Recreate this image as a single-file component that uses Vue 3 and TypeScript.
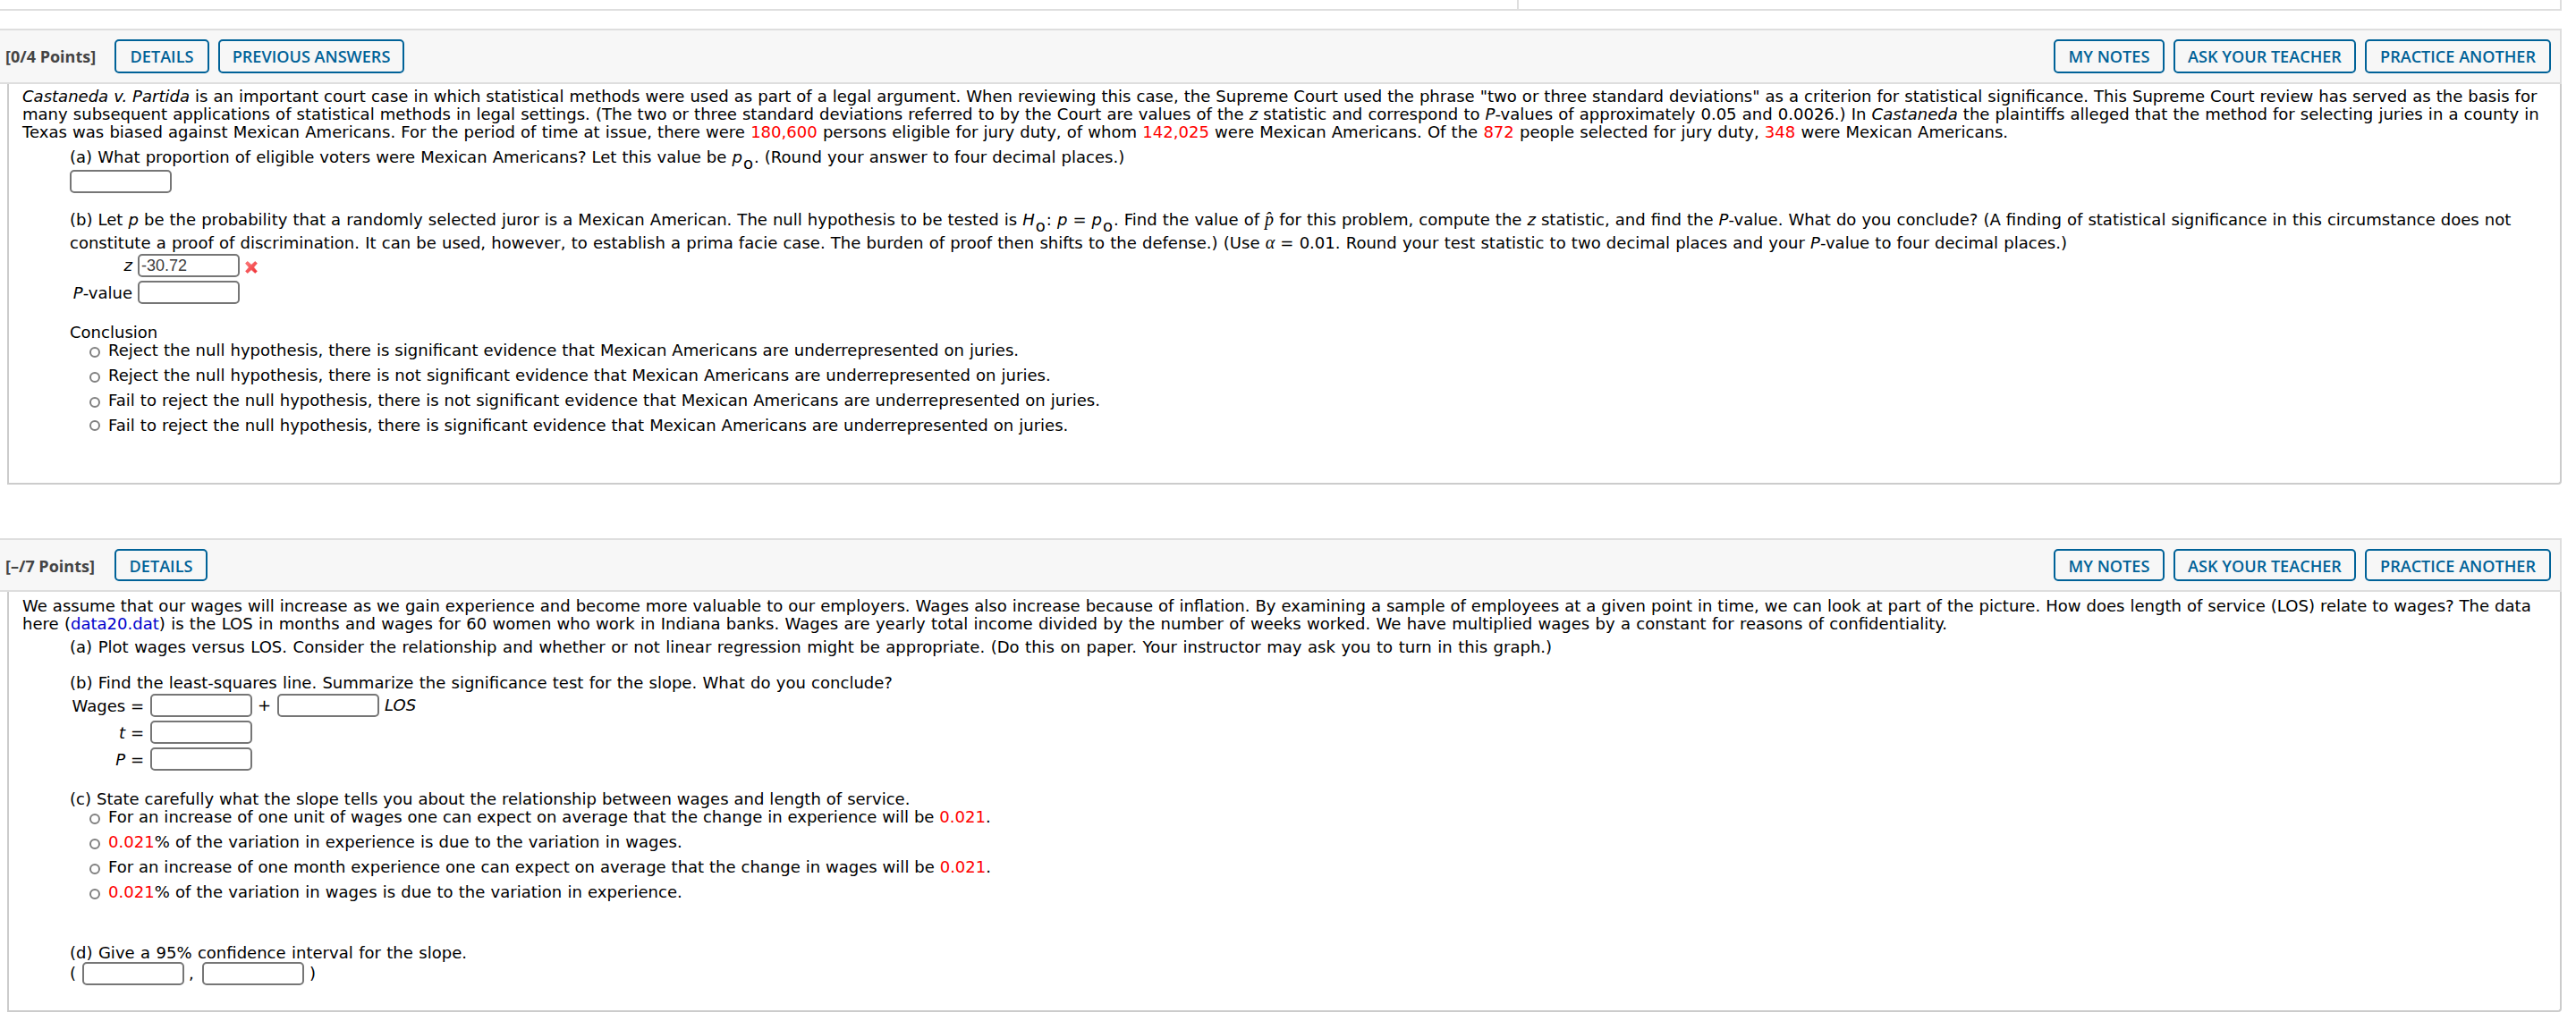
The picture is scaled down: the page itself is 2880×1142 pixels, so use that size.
<script setup lang="ts">
import { ref } from 'vue'

const actions = [
  { label: 'MY NOTES', width: 124 },
  { label: 'ASK YOUR TEACHER', width: 204 },
  { label: 'PRACTICE ANOTHER', width: 208 },
]
const conclusions = [
  'Reject the null hypothesis, there is significant evidence that Mexican Americans are underrepresented on juries.',
  'Reject the null hypothesis, there is not significant evidence that Mexican Americans are underrepresented on juries.',
  'Fail to reject the null hypothesis, there is not significant evidence that Mexican Americans are underrepresented on juries.',
  'Fail to reject the null hypothesis, there is significant evidence that Mexican Americans are underrepresented on juries.',
]
const slopes = [
  ['For an increase of one unit of wages one can expect on average that the change in experience will be ', '0.021', '.'],
  ['', '0.021', '% of the variation in experience is due to the variation in wages.'],
  ['For an increase of one month experience one can expect on average that the change in wages will be ', '0.021', '.'],
  ['', '0.021', '% of the variation in wages is due to the variation in experience.'],
]
const zValue = ref('-30.72')
</script>

<template>
  <div class="page">
    <div class="previous"><div class="previous-left"></div></div>

    <section class="question first">
      <header class="bar">
        <span class="points">[0/4 Points]</span>
        <button class="btn details">DETAILS</button>
        <button class="btn answers">PREVIOUS ANSWERS</button>
        <div class="actions">
          <button v-for="a in actions" :key="a.label" class="btn" :style="{ width: a.width + 'px' }">{{ a.label }}</button>
        </div>
      </header>
      <div class="body">
        <p class="t l1"><i>Castaneda v. Partida</i> is an important court case in which statistical methods were used as part of a legal argument. When reviewing this case, the Supreme Court used the phrase "two or three standard deviations" as a criterion for statistical significance. This Supreme Court review has served as the basis for</p>
        <p class="t l2">many subsequent applications of statistical methods in legal settings. (The two or three standard deviations referred to by the Court are values of the <i>z</i> statistic and correspond to <i>P</i>-values of approximately 0.05 and 0.0026.) In <i>Castaneda</i> the plaintiffs alleged that the method for selecting juries in a county in</p>
        <p class="t l3">Texas was biased against Mexican Americans. For the period of time at issue, there were <b>180,600</b> persons eligible for jury duty, of whom <b>142,025</b> were Mexican Americans. Of the <b>872</b> people selected for jury duty, <b>348</b> were Mexican Americans.</p>
        <div class="parts">
          <p class="t part-a">(a) What proportion of eligible voters were Mexican Americans? Let this value be <i>p</i><sub>o</sub>. (Round your answer to four decimal places.)</p>
          <input class="box input-a" />
          <p class="t part-b">(b) Let <i>p</i> be the probability that a randomly selected juror is a Mexican American. The null hypothesis to be tested is <i>H</i><sub>o</sub>: <i>p</i> = <i>p</i><sub>o</sub>. Find the value of <span class="math">p̂</span> for this problem, compute the <i>z</i> statistic, and find the <i>P</i>-value. What do you conclude? (A finding of statistical significance in this circumstance does not</p>
          <p class="t part-b2">constitute a proof of discrimination. It can be used, however, to establish a prima facie case. The burden of proof then shifts to the defense.) (Use <span class="math">α</span> = 0.01. Round your test statistic to two decimal places and your <i>P</i>-value to four decimal places.)</p>
          <div class="fields stats">
            <div class="field">
              <span class="label t"><i>z</i></span><input v-model="zValue" class="box" />
              <svg class="wrong" width="14" height="14" viewBox="0 0 14 14">
                <defs><linearGradient id="wrongFill" x1="0" y1="0" x2="1" y2="1"><stop offset="0" stop-color="#ff8080" /><stop offset="1" stop-color="#ee2b30" /></linearGradient></defs>
                <path d="M2.8 .6 7 4.4 11.2.6 13.4 2.6 9.6 7l3.8 4.4-2.2 2L7 9.6l-4.2 3.8-2.2-2L4.4 7 .6 2.6z" fill="url(#wrongFill)" stroke="#f2484c" stroke-width=".7" stroke-linejoin="round" />
              </svg>
            </div>
            <div class="field"><span class="label t p-value"><i>P</i>-value</span><input class="box" /></div>
          </div>
          <p class="t conclusion">Conclusion</p>
          <label v-for="c in conclusions" :key="c" class="option"><span class="radio"></span><span class="t">{{ c }}</span></label>
        </div>
      </div>
    </section>

    <section class="question second">
      <header class="bar">
        <span class="points">[–/7 Points]</span>
        <button class="btn details">DETAILS</button>
        <div class="actions">
          <button v-for="a in actions" :key="a.label" class="btn" :style="{ width: a.width + 'px' }">{{ a.label }}</button>
        </div>
      </header>
      <div class="body">
        <p class="t m1">We assume that our wages will increase as we gain experience and become more valuable to our employers. Wages also increase because of inflation. By examining a sample of employees at a given point in time, we can look at part of the picture. How does length of service (LOS) relate to wages? The data</p>
        <p class="t m2">here (<a>data20.dat</a>) is the LOS in months and wages for 60 women who work in Indiana banks. Wages are yearly total income divided by the number of weeks worked. We have multiplied wages by a constant for reasons of confidentiality.</p>
        <div class="parts">
          <p class="t plot">(a) Plot wages versus LOS. Consider the relationship and whether or not linear regression might be appropriate. (Do this on paper. Your instructor may ask you to turn in this graph.)</p>
          <p class="t line">(b) Find the least-squares line. Summarize the significance test for the slope. What do you conclude?</p>
          <div class="fields model">
            <div class="field">
              <span class="label t">Wages =</span><input class="box" />
              <span class="t plus">+</span><input class="box" /><i class="t los">LOS</i>
            </div>
            <div class="field"><span class="label t"><i>t</i> =</span><input class="box" /></div>
            <div class="field"><span class="label t"><i>P</i> =</span><input class="box" /></div>
          </div>
          <p class="t state">(c) State carefully what the slope tells you about the relationship between wages and length of service.</p>
          <label v-for="(s, i) in slopes" :key="i" class="option" :class="{ wide: s[0] }"><span class="radio"></span><span class="t">{{ s[0] }}<b>{{ s[1] }}</b>{{ s[2] }}</span></label>
          <p class="t interval-title">(d) Give a 95% confidence interval for the slope.</p>
          <div class="interval"><span class="t">(</span><input class="box" /><span class="t comma">,</span><input class="box" /><span class="t close">)</span></div>
        </div>
      </div>
    </section>
  </div>
</template>

<style>
body { margin: 0; background: #fff; }
</style>

<style scoped>
* { box-sizing: border-box; }
.page { width: 2880px; height: 1142px; overflow: hidden; background: #fff; color: #000; font-family: "DejaVu Sans", Verdana, sans-serif; font-size: 18.05px; line-height: 20px; }
p { margin: 0; }
.t { white-space: nowrap; }
.previous { width: 2864px; height: 12px; border: solid #dedede; border-width: 0 2px 2px 0; }
.previous-left { width: 1698px; height: 10px; border-right: 2px solid #dedede; }
.question { display: flex; flex-direction: column; width: 2864px; }
.first { margin-top: 20px; height: 510px; }
.second { margin-top: 60px; height: 530px; }
.bar { display: flex; align-items: flex-start; height: 62px; flex: none; padding: 10px 10px 0 6px; background: #f7f7f7; border: solid #dedede; border-width: 2px 2px 2px 0; }
.second .bar { height: 60px; }
.points { width: 122px; padding-top: 7px; color: #444; font: 700 18px/25px "Open Sans", sans-serif; white-space: nowrap; }
.btn { height: 38px; margin: 0 10px 0 0; padding: 5px 0 0; display: flex; align-items: flex-start; justify-content: center; background: transparent; border: 2px solid #006298; border-radius: 5px; color: #006298; font: 600 18.1px/25px "Open Sans", sans-serif; white-space: nowrap; }
.details { width: 106px; }
.answers { width: 208px; }
.second .btn { height: 36px; }
.second .details { width: 104px; }
.actions { display: flex; margin-left: auto; }
.actions .btn:last-child { margin-right: 0; }
.body { flex: 1; margin-left: 8px; padding: 4px 0 0 15px; border: solid #ccc; border-width: 0 2px 2px 2px; border-radius: 0 0 4px 0; }
.second .body { padding-top: 6px; }
.parts { padding-left: 53px; }
b { font-weight: 400; color: #f00; }
a { color: #00c; }
sub { margin: 0 1px; font-size: inherit; line-height: 0; vertical-align: -7px; }
.math { font-family: "Liberation Serif", serif; font-style: italic; font-size: 20px; line-height: 0; }
.box { display: block; width: 114px; height: 26px; padding: 1px 2px 0; background: #fff; border: 2px solid #767676; border-radius: 5px; outline: 0; color: #3c3c3c; font: 18px/20px "Liberation Sans", Arial, sans-serif; }
.l1 { word-spacing: .28px; }
.l2 { word-spacing: .38px; }
.l3 { word-spacing: .45px; }
.part-a { margin-top: 8px; word-spacing: .36px; }
.input-a { margin-top: 4px; }
.part-b { margin-top: 20px; word-spacing: .3px; }
.part-b2 { margin-top: 6px; word-spacing: .44px; }
.fields { display: flex; flex-direction: column; gap: 4px; margin-top: 2px; }
.field { display: flex; align-items: flex-start; height: 26px; }
.label { width: 70px; margin-right: 6px; padding-top: 3px; text-align: right; }
.p-value { padding-top: 4px; }
.wrong { margin: 8px 0 0 6px; }
.conclusion { margin-top: 22px; }
.option { display: flex; height: 28px; padding-left: 22px; word-spacing: .3px; }
.second .option { word-spacing: .45px; }
.second .wide { word-spacing: .13px; }
.radio { width: 12px; height: 12px; margin: 6px 9px 0 0; border: 2px solid #808080; border-radius: 50%; }
.first .option:last-child .radio { margin-top: 4px; }
.m1 { word-spacing: .25px; }
.m2 { word-spacing: .55px; }
.plot { margin-top: 6px; word-spacing: .78px; }
.line { margin-top: 20px; word-spacing: .5px; }
.model .label { width: 83px; margin-right: 7px; padding-top: 4px; }
.plus { width: 28px; padding: 3px 0 0 6px; }
.los { padding: 3px 0 0 6px; }
.state { margin-top: 22px; word-spacing: .22px; }
.interval-title { margin-top: 40px; word-spacing: .65px; }
.interval { display: flex; align-items: flex-start; height: 26px; }
.interval .t { width: 14px; padding-top: 3px; }
.interval .comma { width: 20px; padding-left: 5px; }
.interval .close { padding-left: 6px; }
</style>
